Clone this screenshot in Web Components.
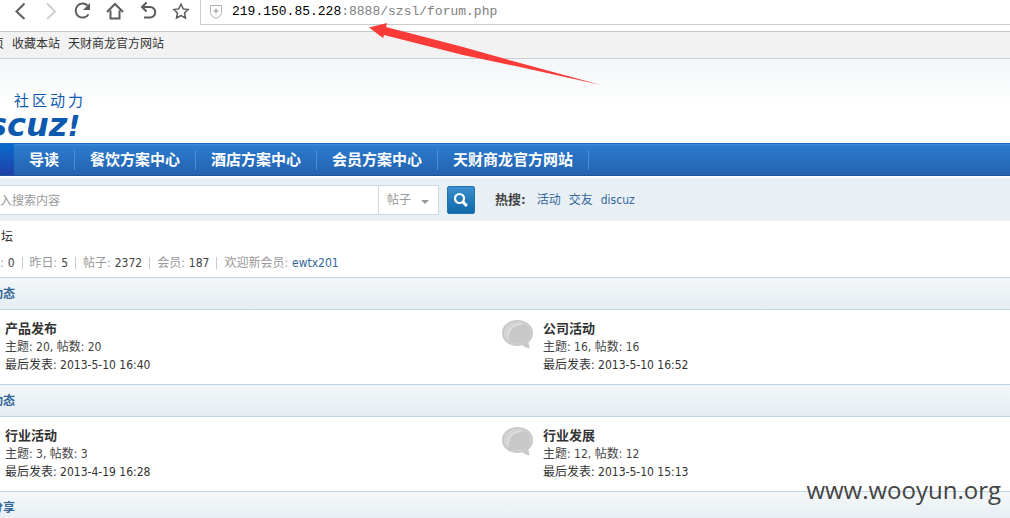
<!DOCTYPE html>
<html lang="zh-CN">
<head>
<meta charset="utf-8">
<title>Discuz!</title>
<style>
  html, body {
    margin: 0;
    height: 100%;
    overflow: hidden;
    background: #fff;
  }
  body {
    position: relative;
    font: 12px/18px "DejaVu Sans Condensed", "Noto Sans", "Noto Sans CJK SC", sans-serif;
    color: #444;
    --link: #369;
    --line: #c2d5e3;
  }
</style>
</head>
<body>
<browser-bar host="219.150.85.228" path=":8888/szsl/forum.php"></browser-bar>
<top-links>
  <a href="#">页</a>
  <a href="#">收藏本站</a>
  <a href="#">天财商龙官方网站</a>
</top-links>
<site-logo></site-logo>
<site-nav>
  <a href="#">导读</a>
  <a href="#">餐饮方案中心</a>
  <a href="#">酒店方案中心</a>
  <a href="#">会员方案中心</a>
  <a href="#">天财商龙官方网站</a>
</site-nav>
<search-bar>
  <a href="#">活动</a>
  <a href="#">交友</a>
  <a href="#">discuz</a>
</search-bar>
<forum-stats></forum-stats>
<forum-section label="动态">
  <forum-item name="产品发布" topics="20" posts="20" last="2013-5-10 16:40"></forum-item>
  <forum-item name="公司活动" topics="16" posts="16" last="2013-5-10 16:52"></forum-item>
</forum-section>
<forum-section label="动态">
  <forum-item name="行业活动" topics="3" posts="3" last="2013-4-19 16:28"></forum-item>
  <forum-item name="行业发展" topics="12" posts="12" last="2013-5-10 15:13"></forum-item>
</forum-section>
<forum-section label="分享"></forum-section>
<red-arrow></red-arrow>
<water-mark>www.wooyun.org</water-mark>

<script>
(function() {
  'use strict';

  // Registers an element whose shadow root is rendered once from its attributes
  function define(name, render) {
    customElements.define(name, class extends HTMLElement {
      constructor() {
        super();
        this.attachShadow({ mode: 'open' });
      }
      connectedCallback() {
        this.shadowRoot.innerHTML = render(this);
      }
    });
  }

  define('browser-bar', el => `
    <style>
      :host { display: flex; height: 31px; background: #fff; }
      .tools { display: flex; flex: none; width: 200px; box-sizing: border-box; padding-left: 10px; gap: 8px; height: 24px; }
      button { flex: none; width: 24px; height: 24px; padding: 0; border: 0; background: none; color: #5c5c5c; }
      button:disabled { color: #d0d0d0; }
      button svg { display: block; fill: none; stroke: currentColor; stroke-width: 2; }
      .address {
        flex: 1; display: flex; align-items: center; gap: 8px; height: 24px; padding-left: 8px;
        border-left: 1px solid #ccc; border-bottom: 1px solid #ccc;
        font: 13px/24px "Liberation Mono", monospace; color: #808080;
      }
      .address svg { flex: none; fill: none; stroke: #b4b4b4; }
      b { font-weight: normal; color: #000; }
    </style>
    <div class="tools">
      <button aria-label="后退"><svg width="24" height="24"><path d="M14.500 3.500 6.500 11.500 14.500 19"/></svg></button>
      <button aria-label="前进" disabled><svg width="24" height="24"><path d="M5 3.500 13 11.500 5 19"/></svg></button>
      <button aria-label="刷新"><svg width="24" height="24"><path d="M13.500 5.500A7 7 0 1 0 14.500 14.500"/><path d="M16 3v7H9z" fill="currentColor" stroke="none"/></svg></button>
      <button aria-label="主页"><svg width="24" height="24"><path d="M1 12 9 4l8 8M4.500 10.500v8h9v-8"/></svg></button>
      <button aria-label="撤销"><svg width="24" height="24"><path d="M4 7h8a5 5 0 0 1 0 10.500H6M8.500 2.500 4 7l4.500 4.500"/></svg></button>
      <button aria-label="收藏"><svg width="24" height="24"><path d="M11 4.200l2.200 4.700 5 .6-3.700 3.500 1 5-4.500-2.500-4.500 2.500 1-5L3.800 9.500l5-.6z" stroke-width="1.500"/></svg></button>
    </div>
    <div class="address">
      <svg width="15" height="16"><path d="M1.500 1.500h11v7c0 3-2.500 4.500-5.500 6-3-1.500-5.500-3-5.500-6z"/><path d="M7 4.500v5M4.500 7h5" stroke="#909090"/></svg>
      <span><b>${el.getAttribute('host')}</b>${el.getAttribute('path')}</span>
    </div>`);

  define('top-links', () => `
    <style>
      :host {
        display: flex; gap: 8px; height: 26px; margin-left: -8px;
        border-top: 1px solid #c6c6c6; border-bottom: 1px solid #cdcdcd;
        background: #f2f2f2; line-height: 24px;
      }
      ::slotted(a) { color: #333; text-decoration: none; }
    </style>
    <slot></slot>`);

  define('site-logo', () => `
    <style>
      :host {
        display: block; height: 84px; box-sizing: border-box; padding-top: 34px;
        background: linear-gradient(#f2f6f8, #fff 48px); color: #0d59b0;
      }
      .tag { display: flex; gap: 3px; padding-left: 14px; font-size: 15px; line-height: 16px; }
      .name { display: flex; align-items: baseline; margin-left: -12px; font: italic bold 32px/32px "DejaVu Sans", sans-serif; }
      small { font-size: 28px; }
    </style>
    <div class="tag"><span>社</span><span>区</span><span>动</span><span>力</span></div>
    <div class="name">scuz<small>!</small></div>`);

  define('site-nav', () => `
    <style>
      :host {
        display: flex; align-items: center; height: 33px; box-sizing: border-box; margin-bottom: 2px;
        border-top: 1px solid #1c6abf; border-bottom: 1px solid #1f5597;
        background: linear-gradient(#4190d8, #2b7acd 2px, #2363b0);
      }
      .current { width: 14px; align-self: stretch; background: linear-gradient(#0a6bcb, #203fa8); }
      ::slotted(a) {
        padding: 0 15px; border-right: 1px solid #4a8fd6;
        color: #fff; font-size: 15px; font-weight: bold; line-height: 20px; text-decoration: none;
      }
    </style>
    <span class="current"></span><slot></slot>`);

  define('search-bar', () => `
    <style>
      :host { display: flex; align-items: center; height: 43px; background: #e8eff5; }
      form { display: flex; align-items: center; gap: 8px; flex: none; }
      .box {
        display: flex; height: 30px; width: 439px; box-sizing: border-box;
        border: 1px solid #ced8de; border-left: 0; background: #fff;
      }
      input {
        flex: 1; min-width: 0; padding: 2px 0 0; border: 0; outline: 0; background: none;
        font: inherit; color: #999;
      }
      input::placeholder { color: #999; opacity: 1; }
      .kind { display: flex; align-items: center; border-left: 1px solid #ced8de; width: 59px; position: relative; }
      select {
        appearance: none; width: 100%; padding: 0 0 0 8px; border: 0; background: none;
        font: inherit; color: #999;
      }
      .kind svg { position: absolute; right: 9px; top: 12px; fill: #999; pointer-events: none; }
      button {
        display: grid; place-items: center; width: 28px; height: 28px; padding: 0;
        border: 1px solid #1f74b1; border-radius: 2px; background: linear-gradient(#3a8dcb, #0f69a9);
      }
      .hot { display: flex; gap: 8px; padding-left: 20px; }
      strong { margin-right: 3px; color: #444; font-size: 13px; }
      ::slotted(a) { color: var(--link); text-decoration: none; }
    </style>
    <form>
      <div class="box">
        <input type="text" aria-label="搜索内容" placeholder="入搜索内容">
        <div class="kind">
          <select aria-label="帖子"><option>帖子</option></select>
          <svg width="8" height="8"><path d="M0 2h8L4 6z"/></svg>
        </div>
      </div>
      <button type="button" aria-label="搜索">
        <svg width="16" height="16" fill="none" stroke="#fff"><circle cx="6.500" cy="6.500" r="4.500" stroke-width="2.200"/><path d="M9.800 9.800l4 4.200" stroke-width="3"/></svg>
      </button>
    </form>
    <div class="hot"><strong>热搜:</strong><slot></slot></div>`);

  define('forum-stats', () => `
    <style>
      :host { display: block; padding-bottom: 4px; }
      .crumb { padding-left: 1px; line-height: 32px; color: #333; }
      .stats { display: flex; line-height: 20px; color: #999; }
      .stats span + span { display: flex; align-items: center; }
      .stats span + span::before { content: ""; width: 1px; height: 12px; margin: 0 7px; background: #ccc; }
      em { margin-left: 4px; font-style: normal; color: #444; }
      a { margin-left: 4px; color: var(--link); text-decoration: none; }
    </style>
    <div class="crumb">坛</div>
    <div class="stats">
      <span>:<em>0</em></span>
      <span>昨日:<em>5</em></span>
      <span>帖子:<em>2372</em></span>
      <span>会员:<em>187</em></span>
      <span>欢迎新会员:<a href="#">ewtx201</a></span>
    </div>`);

  define('forum-section', el => `
    <style>
      :host { display: block; }
      h2 {
        box-sizing: border-box; height: 33px; margin: 0; text-indent: -9px;
        border-top: 1px solid var(--line); border-bottom: 1px solid var(--line);
        background: linear-gradient(#f3f7f9, #e6edf1);
        font-size: 12px; line-height: 33px; color: var(--link);
      }
      /* the board is wider than the window on both sides */
      .grid { display: grid; grid-template-columns: 1fr 1fr; margin: 0 -30px 0 -36px; }
    </style>
    <h2>${el.getAttribute('label')}</h2>
    <div class="grid"><slot></slot></div>`);

  define('forum-item', el => `
    <style>
      :host { display: flex; gap: 9px; padding: 10px 0; }
      svg { flex: none; }
      h3 { margin: 0; font-size: 13px; line-height: 18px; }
      h3 a { color: #333; }
      a { color: inherit; text-decoration: none; }
      p { margin: 0; }
      .last { color: #333; }
    </style>
    <svg width="32" height="30" aria-hidden="true">
      <path d="M15.500 0C24.500 0 31 5.500 31 13c0 4-1.500 7-4.500 9.300.2 2.500.9 4.700 1.500 6-3.500-.3-6-1.300-7.500-3-1.600.4-3.200.7-5 .7C6.500 26 0 20.500 0 13S6.500 0 15.500 0z" fill="#c9c9c9"/>
      <path d="M15.500 1.800c8 0 13.700 4.800 13.700 11.200S23.500 24.200 15.500 24.200 1.800 19.400 1.800 13 7.500 1.800 15.500 1.800z" fill="#d3d3d3"/>
      <path d="M7 22C6 12 11 5.500 22 4c4 2 6.500 5 6.500 9 0 6.500-5.500 10.500-13 10.500C12 23.500 9.500 23 7 22z" fill="#c8c8c8"/>
      <path d="M5.500 18C5 10 11 4.500 19.500 4" fill="none" stroke="#dedede" stroke-width="1.500"/>
    </svg>
    <div>
      <h3><a href="#">${el.getAttribute('name')}</a></h3>
      <p>主题: ${el.getAttribute('topics')}, 帖数: ${el.getAttribute('posts')}</p>
      <p class="last"><a href="#">最后发表: ${el.getAttribute('last')}</a></p>
    </div>`);

  define('red-arrow', () => `
    <style>
      :host { position: absolute; left: 369px; top: 23px; pointer-events: none; }
      svg { display: block; }
    </style>
    <svg width="233" height="63"><path d="M0 4.500 18 0 17 4 94 24 151 40 232 62 151 44 94 32 15 12 14 15z" fill="#fb3b38"/></svg>`);

  define('water-mark', () => `
    <style>
      :host {
        position: absolute; right: 9px; bottom: 12px; pointer-events: none;
        font: 24px/32px "Open Sans", "Noto Sans", sans-serif; color: #444;
      }
    </style>
    <slot></slot>`);
})();
</script>
</body>
</html>
